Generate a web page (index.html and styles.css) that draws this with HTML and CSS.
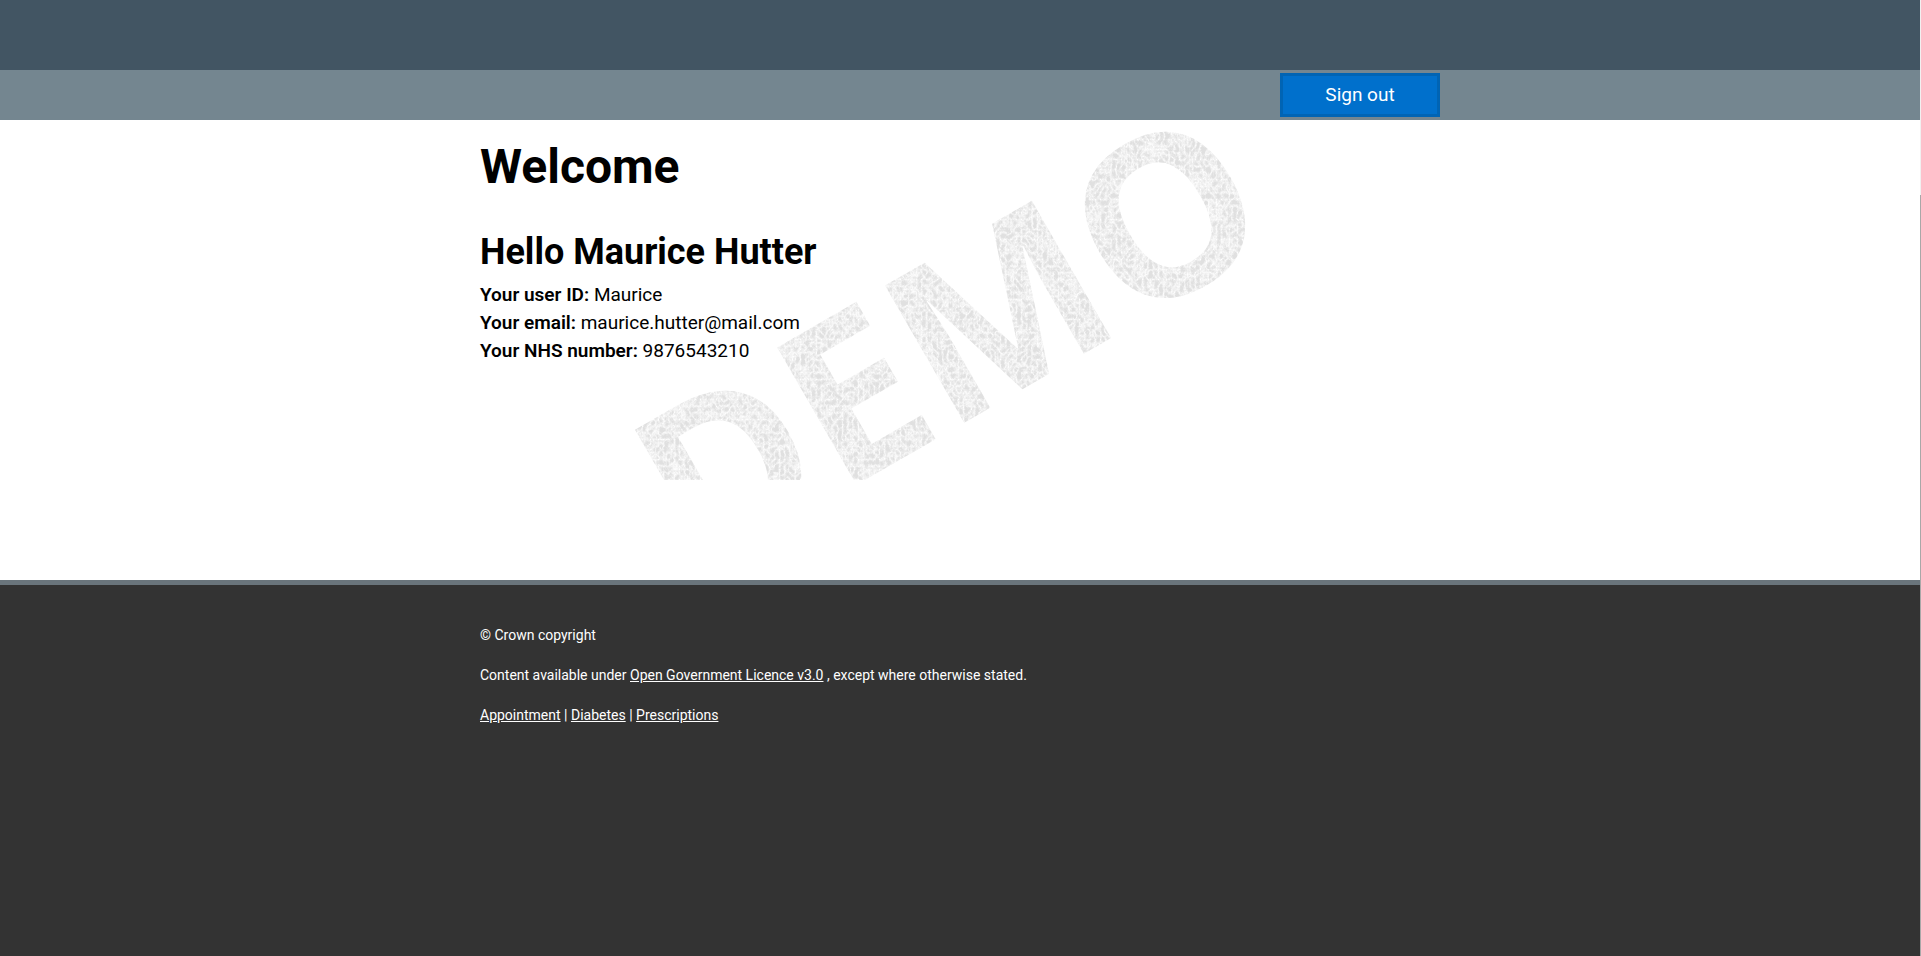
FILE: index.html
```html
<!DOCTYPE html>
<html lang="en">
<head>
<meta charset="utf-8">
<title>Welcome</title>
<link rel="stylesheet" href="styles.css">
</head>
<body>
<header class="masthead"></header>
<nav class="toolbar">
  <div class="container toolbar-inner">
    <button type="button" class="sign-out">Sign out</button>
  </div>
</nav>
<main class="content">
  <div class="container profile">
    <svg class="watermark" viewBox="0 0 960 360" aria-hidden="true">
      <filter id="scratches" x="0" y="0" width="1" height="1" color-interpolation-filters="sRGB">
        <feTurbulence type="turbulence" baseFrequency="0.19 0.15" numOctaves="4" seed="4" result="noise"/>
        <feColorMatrix in="noise" type="matrix" values="0 0 0 0 0  0 0 0 0 0  0 0 0 0 0  0.5 0 0 1.7 -0.1" result="mask"/>
        <feComposite in="SourceGraphic" in2="mask" operator="in"/>
      </filter>
      <g filter="url(#scratches)">
        <text class="watermark-text" transform="translate(217 457) rotate(-30)">DEMO</text>
      </g>
    </svg>
    <h1 class="title">Welcome</h1>
    <h2 class="greeting">Hello Maurice Hutter</h2>
    <p class="detail"><strong>Your user ID:</strong> Maurice</p>
    <p class="detail"><strong>Your email:</strong> maurice.hutter@mail.com</p>
    <p class="detail"><strong>Your NHS number:</strong> 9876543210</p>
  </div>
</main>
<footer class="footer">
  <div class="container footer-inner">
    <p>© Crown copyright</p>
    <p>Content available under <a href="#licence">Open Government Licence v3.0</a> , except where otherwise stated.</p>
    <p><a href="#appointment">Appointment</a> | <a href="#diabetes">Diabetes</a> | <a href="#prescriptions">Prescriptions</a></p>
  </div>
</footer>
<div class="scroll-track"><div class="scroll-thumb"></div></div>
</body>
</html>
```
FILE: styles.css
```css
* { box-sizing: border-box; }

body {
  margin: 0;
  padding-right: 1px;
  min-height: 100vh;
  display: flex;
  flex-direction: column;
  background: #fff;
  color: #000;
  font-family: Roboto, "Liberation Sans", sans-serif;
  font-size: 19px;
  line-height: 28px;
}

.container {
  width: 100%;
  max-width: 960px;
  margin: 0 auto;
}

.masthead {
  height: 70px;
  background: #425563;
}

.toolbar { background: #748690; }

.toolbar-inner {
  display: flex;
  justify-content: flex-end;
  padding: 3px 0;
}

.sign-out {
  width: 160px;
  height: 44px;
  border: 3px solid #0064b4;
  border-radius: 0;
  background: #0070cc;
  color: #fff;
  font: 400 19px/28px Roboto, "Liberation Sans", sans-serif;
  cursor: pointer;
}

.content { padding-bottom: 100px; }

.profile {
  position: relative;
  min-height: 360px;
  padding-top: 19px;
}

.watermark {
  position: absolute;
  inset: 0;
  z-index: -1;
  width: 100%;
  height: 360px;
}

.watermark-text {
  fill: #e0e0e0;
  font: 700 222px "Open Sans", sans-serif;
}

.title {
  margin: 0;
  font-size: 48px;
  line-height: 56px;
  font-weight: 700;
}

.greeting {
  margin: 35px 0 7px;
  font-size: 36px;
  line-height: 44px;
  font-weight: 700;
}

.detail {
  margin: 0;
  font-weight: 400;
}

.detail strong { font-weight: 600; }

.footer {
  flex: 1;
  border-top: 5px solid #6a757c;
  background: #333;
  color: #fff;
  font-size: 14px;
  line-height: 20px;
}

.footer-inner { padding: 40px 0; }

.footer p { margin: 0 0 20px; }

.footer a { color: #fff; }

.scroll-track {
  position: fixed;
  top: 0;
  right: 0;
  bottom: 0;
  width: 1px;
  padding-top: 195px;
  background: #f1f1f1;
}

.scroll-thumb {
  height: 100%;
  background: #a8a8a8;
}
```
